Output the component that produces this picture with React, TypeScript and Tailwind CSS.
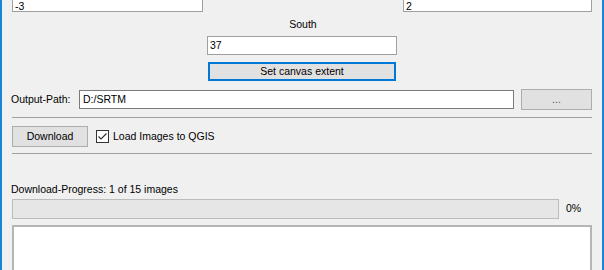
import React from "react";

const font = { fontFamily: '"Liberation Sans", Arial, sans-serif' };

export default function App() {
  return (
    <div
      className="w-[604px] h-[270px] overflow-hidden bg-[#f0f0f0] border-l-2 border-r-2 border-[#1a85d6] text-[10.5px] text-black"
      style={font}
    >
      <div className="pl-[10px] pr-[10px] flex flex-col">
        {/* Row 1: West / East inputs (cut at top) */}
        <div className="flex justify-between -mt-[10px] h-[22px]">
          <div className="w-[191px] h-[22px] bg-white border border-[#a0a0a0] pl-[2px] leading-[12px] pt-[9px]">-3</div>
          <div className="w-[189px] h-[22px] bg-white border border-[#a0a0a0] pl-[2px] leading-[12px] pt-[9px]">2</div>
        </div>
        {/* South */}
        <div className="flex flex-col items-center">
          <div className="mt-[6px] h-[13px] leading-[13px] ml-[2px]">South</div>
          <div className="mt-[5px] w-[190px] h-[19px] bg-white border border-[#a0a0a0] pl-[2px] leading-[17px]">37</div>
          <button className="mt-[7px] w-[188px] h-[19px] bg-[#e1e1e1] border-2 border-[#0078d7] leading-[15px] text-center">
            Set canvas extent
          </button>
        </div>
        {/* Output path */}
        <div className="flex items-center mt-[8px] h-[21px]">
          <div className="w-[68px] -ml-[1px]">Output-Path:</div>
          <div className="w-[435px] h-[19px] bg-white border border-[#7a7a7a] pl-[3px] leading-[17px]">D:/SRTM</div>
          <button className="ml-[7px] w-[71px] h-[21px] bg-[#e1e1e1] border border-[#adadad] leading-[15px] text-center text-[#555]">
            ...
          </button>
        </div>
        <div className="mt-[7px] h-px bg-[#a0a0a0] w-[580px]" />
        {/* Download row */}
        <div className="flex items-center mt-[8px] h-[21px]">
          <button className="w-[76px] h-[21px] bg-[#e1e1e1] border border-[#adadad] text-center leading-[19px]">
            Download
          </button>
          <div className="ml-[8px] w-[13px] h-[13px] bg-white border border-[#333] flex items-center justify-center">
            <svg width="11" height="11" viewBox="0 0 11 11">
              <path d="M1.5 5.5 L4 8 L9.5 2.5" fill="none" stroke="#333" strokeWidth="1.2" />
            </svg>
          </div>
          <div className="ml-[4px]">Load Images to QGIS</div>
        </div>
        <div className="mt-[6px] h-px bg-[#a0a0a0] w-[580px]" />
        {/* Progress */}
        <div className="mt-[29px] h-[13px] leading-[13px] -ml-[1px]">Download-Progress: 1 of 15 images</div>
        <div className="flex items-center mt-[3px] h-[20px]">
          <div className="w-[547px] h-[20px] bg-[#e6e6e6] border border-[#bcbcbc]" />
          <div className="ml-[7px]">0%</div>
        </div>
        <div className="mt-[6px] w-[580px] h-[60px] bg-white border-2 border-[#b5b5b5] border-b-0" />
      </div>
    </div>
  );
}
